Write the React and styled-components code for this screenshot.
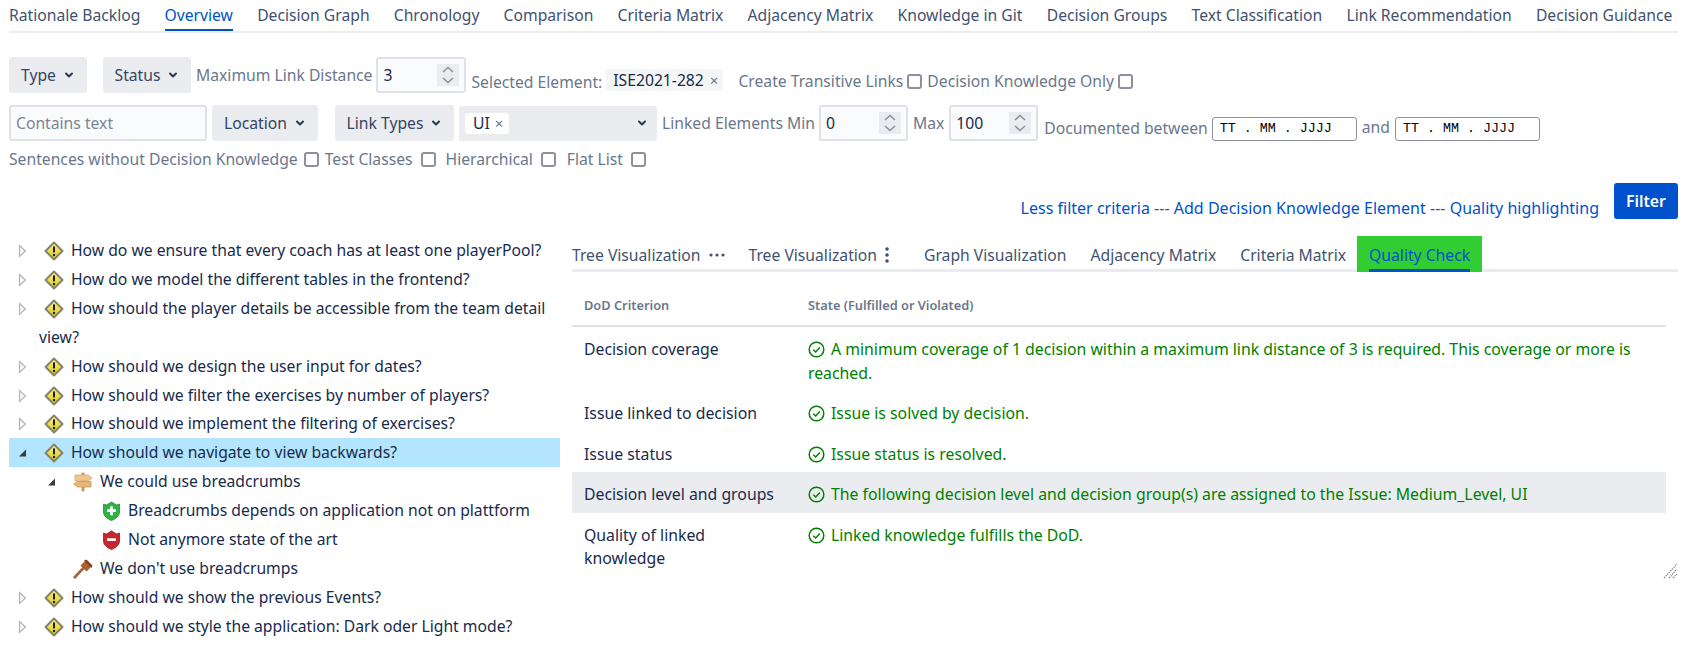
import React from "react";
import styled, { createGlobalStyle } from "styled-components";

const Global = createGlobalStyle`
  html, body {
    margin: 0;
    height: 645px;
    overflow: hidden;
    background: #fff;
  }
  body {
    font-family: "Noto Sans", "Open Sans", sans-serif;
    font-size: 15.7px;
    color: #172b4d;
  }
`;

const Page = styled.div`
  width: 1669px;
  padding: 0 7px 0 9px;
`;

const MainTabs = styled.nav`
  display: flex;
  gap: 24.2px;
  height: 31px;
  border-bottom: 2px solid #ebecf0;
`;

const MainTab = styled.a`
  height: 31px;
  line-height: 30px;
  white-space: nowrap;
  color: ${(p) => (p.$active ? "#0052cc" : "#42526e")};
  box-shadow: ${(p) => (p.$active ? "inset 0 -2px 0 #0052cc" : "none")};
`;

const FilterRow = styled.div`
  display: flex;
  align-items: center;
  height: ${(p) => p.$height || 36}px;
  margin-top: ${(p) => p.$top || 0}px;
`;

const DropButton = styled.div`
  box-sizing: border-box;
  display: flex;
  align-items: center;
  justify-content: center;
  gap: 7px;
  width: ${(p) => p.$width}px;
  height: 36px;
  margin-right: ${(p) => p.$right || 0}px;
  background: #ebecf0;
  border-radius: 3px;
  color: #344563;
  white-space: nowrap;
`;

const Label = styled.span`
  color: #6b778c;
  white-space: nowrap;
  margin-left: ${(p) => p.$left || 0}px;
  margin-right: ${(p) => p.$right || 0}px;
  position: relative;
  top: ${(p) => p.$down || 0}px;
`;

const TextBox = styled.div`
  box-sizing: border-box;
  display: flex;
  align-items: center;
  width: ${(p) => p.$width}px;
  height: 36px;
  margin-right: ${(p) => p.$right || 0}px;
  padding-left: 5px;
  background: #fafbfc;
  border: 2px solid #dfe1e6;
  border-radius: 3px;
  color: ${(p) => (p.$placeholder ? "#7a869a" : "#172b4d")};
`;

const Spinner = styled.svg`
  margin-left: auto;
  margin-right: 5px;
  flex: none;
`;

const ChipSelected = styled.span`
  display: inline-flex;
  align-items: center;
  gap: 6px;
  height: 22px;
  margin-left: 4px;
  padding: 0 5px 0 7px;
  background: #f4f5f7;
  border-radius: 3px;
  position: relative;
  top: 5px;
  white-space: nowrap;
`;

const ChipX = styled.span`
  font-size: 15px;
  color: #6b778c;
`;

const MultiSelect = styled.div`
  box-sizing: border-box;
  display: flex;
  align-items: center;
  justify-content: space-between;
  width: 198px;
  height: 35px;
  margin-left: 5px;
  padding: 0 9px 0 6px;
  background: #ebecf0;
  border-radius: 3px;
`;

const SelectChip = styled.span`
  display: inline-flex;
  align-items: center;
  gap: 5px;
  height: 21px;
  padding: 0 6px 0 8px;
  background: #fff;
  border-radius: 3px;
`;

const Check = styled.span`
  box-sizing: border-box;
  display: inline-block;
  flex: none;
  width: 15px;
  height: 15px;
  margin-left: ${(p) => p.$left || 4}px;
  margin-right: ${(p) => p.$right || 0}px;
  margin-top: ${(p) => p.$down || 0}px;
  border: 2px solid #8f8f9d;
  border-radius: 3px;
  background: #fff;
`;

const DateBox = styled.div`
  box-sizing: border-box;
  width: 145px;
  height: 24px;
  margin-top: 12px;
  padding: 0 0 0 7px;
  line-height: 21px;
  border: 1px solid #8f8f9d;
  border-radius: 3px;
  font-family: "Liberation Mono", monospace;
  font-size: 13.33px;
  color: #000;
  white-space: pre;
`;

const ActionRow = styled.div`
  display: flex;
  justify-content: flex-end;
  align-items: flex-end;
  height: 36px;
  margin-top: 12px;
`;

const Links = styled.div`
  margin-right: 15px;
  color: #42526e;
  font-size: 16.05px;
  line-height: 22px;
  white-space: nowrap;
`;

const LinkText = styled.a`
  color: #0052cc;
`;

const FilterButton = styled.button`
  width: 64px;
  height: 36px;
  padding: 0;
  border: none;
  border-radius: 3px;
  background: #0052cc;
  color: #fff;
  font: 600 15.8px "Noto Sans", sans-serif;
`;

const Panels = styled.div`
  display: grid;
  grid-template-columns: 551px 1106px;
  gap: 12px;
  margin-top: 17px;
  position: relative;
`;

const Tree = styled.ul`
  list-style: none;
  margin: 0;
  padding: 0;
  line-height: 28.9px;
`;

const Node = styled.li`
  position: relative;
  padding-left: ${(p) => 30 + (p.$level || 0) * 29}px;
  padding-right: 8px;
  background: ${(p) => (p.$selected ? "#b3e5ff" : "transparent")};
`;

const Arrow = styled.svg`
  position: absolute;
  top: 8px;
  left: ${(p) => 7 + (p.$level || 0) * 29}px;
`;

const NodeIcon = styled.svg`
  display: inline-block;
  vertical-align: -5px;
  margin: 0 7px 0 5px;
`;

const RightPanel = styled.section`
  min-width: 0;
`;

const SubTabs = styled.div`
  display: flex;
  gap: 24px;
  height: 33px;
  border-bottom: 3px solid #ebecf0;
`;

const SubTab = styled.a`
  display: flex;
  align-items: center;
  gap: 8px;
  height: 38px;
  margin-right: ${(p) => p.$right || 0}px;
  color: #42526e;
  white-space: nowrap;
`;

const ActiveTab = styled.a`
  display: block;
  height: 36px;
  margin-left: -13px;
  padding: 0 12px;
  background: #32cd32;
  color: #0052cc;
  line-height: 38px;
  white-space: nowrap;
`;

const ActiveLabel = styled.span`
  display: block;
  height: 36px;
  box-sizing: border-box;
  border-bottom: 3px solid #0052cc;
`;

const Table = styled.table`
  width: 1094px;
  border-collapse: collapse;
  table-layout: fixed;
`;

const HeadCell = styled.th`
  height: 54px;
  padding: 13px 12px 0;
  box-sizing: border-box;
  border-bottom: 2px solid #dfe1e6;
  text-align: left;
  font-size: 12.8px;
  font-weight: 600;
  color: #6b778c;
  width: ${(p) => p.$width || "auto"};
`;

const Row = styled.tr`
  background: ${(p) => (p.$shade ? "#ebecf0" : "transparent")};
`;

const Cell = styled.td`
  padding: 11px ${(p) => (p.$ok ? 12 : 8)}px 6px 12px;
  font-size: 15.8px;
  line-height: 23.5px;
  vertical-align: top;
  color: ${(p) => (p.$ok ? "#008000" : "#172b4d")};
`;

const OkIcon = styled.svg`
  display: inline-block;
  vertical-align: -3px;
  margin-right: 6px;
`;

const ResizeHandle = styled.svg`
  position: absolute;
  left: 1654px;
  top: 327px;
`;

function Chevron() {
  return (
    <svg width="12" height="12" viewBox="0 0 12 12">
      <path d="M3 4.5 L6 7.5 L9 4.5" fill="none" stroke="#253858" strokeWidth="2" strokeLinecap="round" strokeLinejoin="round" />
    </svg>
  );
}

function Spin() {
  return (
    <Spinner width="22" height="22" viewBox="0 0 22 22">
      <rect width="22" height="22" fill="#ebecf0" />
      <path d="M6 8 L11 3.5 L16 8 M6 14 L11 18.5 L16 14" fill="none" stroke="#8d939e" strokeWidth="1.6" />
    </Spinner>
  );
}

function Warn() {
  return (
    <NodeIcon width="20" height="20" viewBox="0 0 20 20">
      <defs>
        <linearGradient id="warnfill" x1="0" y1="0" x2="0" y2="1">
          <stop offset="0" stopColor="#fff38a" />
          <stop offset="1" stopColor="#d6c810" />
        </linearGradient>
      </defs>
      <path d="M10 1.5 L18.5 10 L10 18.5 L1.5 10 Z" fill="url(#warnfill)" stroke="#85826c" strokeWidth="2" strokeLinejoin="round" />
      <rect x="9" y="5.2" width="2" height="6.4" rx="0.8" fill="#1b1b1b" />
      <circle cx="10" cy="14" r="1.2" fill="#1b1b1b" />
    </NodeIcon>
  );
}

function Sign() {
  return (
    <NodeIcon width="20" height="20" viewBox="0 0 20 20">
      <rect x="8.5" y="0.5" width="3" height="19" rx="1" fill="#c59a63" />
      <path d="M2 3 H15.5 L19 6 L15.5 9 H2 Z" fill="#eec48f" stroke="#d7aa74" strokeWidth="0.8" />
      <path d="M18 9.5 H4.5 L0.8 12.2 L4.5 15 H18 Z" fill="#e5b67c" stroke="#c9985f" strokeWidth="0.8" />
    </NodeIcon>
  );
}

function Shield({ color, dark, plus }) {
  return (
    <NodeIcon width="19" height="20" viewBox="0 0 18 20">
      <path d="M1 3 L4 4 L9 1 L14 4 L17 3 V11 C17 15 13 18 9 19.5 C5 18 1 15 1 11 Z" fill={color} stroke={dark} strokeWidth="0.8" />
      <rect x="4.5" y="8.2" width="9" height="2.8" rx="0.5" fill="#fff" />
      {plus && <rect x="7.6" y="5.2" width="2.8" height="9" rx="0.5" fill="#fff" />}
    </NodeIcon>
  );
}

function Gavel() {
  return (
    <NodeIcon width="20" height="20" viewBox="0 0 20 20">
      <path d="M1.8 18.2 L10 9.5" stroke="#a5673f" strokeWidth="2.8" strokeLinecap="round" />
      <path d="M7.5 6.5 L12.5 1.5 L18.5 7.5 L13.5 12.5 Z" fill="#a9602c" />
      <path d="M11 1.5 L13.5 0.5 L19.5 6.5 L18.5 9 Z" fill="#7f4419" />
    </NodeIcon>
  );
}

function ClosedArrow({ level }) {
  return (
    <Arrow $level={level} width="12" height="14" viewBox="0 0 12 14">
      <path d="M3.5 1.5 L9.5 7 L3.5 12.5 Z" fill="#f6f6f6" stroke="#b5b5b5" strokeWidth="1.2" />
    </Arrow>
  );
}

function OpenArrow({ level }) {
  return (
    <Arrow $level={level} width="12" height="14" viewBox="0 0 12 14">
      <path d="M10 3.5 V10.5 H3 Z" fill="#3c3c3c" />
    </Arrow>
  );
}

function Ok() {
  return (
    <OkIcon width="17" height="17" viewBox="0 0 17 17">
      <circle cx="8.5" cy="8.5" r="7.3" fill="none" stroke="#008000" strokeWidth="1.5" />
      <path d="M5.3 8.7 L7.7 11 L11.8 6.4" fill="none" stroke="#008000" strokeWidth="1.5" />
    </OkIcon>
  );
}

const mainTabs = [
  "Rationale Backlog",
  "Overview",
  "Decision Graph",
  "Chronology",
  "Comparison",
  "Criteria Matrix",
  "Adjacency Matrix",
  "Knowledge in Git",
  "Decision Groups",
  "Text Classification",
  "Link Recommendation",
  "Decision Guidance",
];

const topQuestions = [
  "How do we ensure that every coach has at least one playerPool?",
  "How do we model the different tables in the frontend?",
  "How should the player details be accessible from the team detail view?",
  "How should we design the user input for dates?",
  "How should we filter the exercises by number of players?",
  "How should we implement the filtering of exercises?",
];

const lastQuestions = [
  "How should we show the previous Events?",
  "How should we style the application: Dark oder Light mode?",
];

export default function App() {
  return (
    <Page>
      <Global />
      <MainTabs>
        {mainTabs.map((t) => (
          <MainTab key={t} $active={t === "Overview"}>{t}</MainTab>
        ))}
      </MainTabs>

      <FilterRow $top={24}>
        <DropButton $width={78} $right={16}>Type <Chevron /></DropButton>
        <DropButton $width={88}>Status <Chevron /></DropButton>
        <Label $left={5} $right={4}>Maximum Link Distance</Label>
        <TextBox $width={90}>3<Spin /></TextBox>
        <Label $left={5} $down={7}>Selected Element:</Label>
        <ChipSelected>ISE2021-282 <ChipX>×</ChipX></ChipSelected>
        <Label $left={15} $down={6}>Create Transitive Links</Label>
        <Check $left={4} $down={12} />
        <Label $left={5} $down={6}>Decision Knowledge Only</Label>
        <Check $left={4} $down={12} />
      </FilterRow>

      <FilterRow $top={12}>
        <TextBox $width={198} $placeholder $right={5}>Contains text</TextBox>
        <DropButton $width={106} $right={17}>Location <Chevron /></DropButton>
        <DropButton $width={119}>Link Types <Chevron /></DropButton>
        <MultiSelect>
          <SelectChip>UI <ChipX>×</ChipX></SelectChip>
          <Chevron />
        </MultiSelect>
        <Label $left={5} $right={4}>Linked Elements Min</Label>
        <TextBox $width={89}>0<Spin /></TextBox>
        <Label $left={5} $right={5}>Max</Label>
        <TextBox $width={89}>100<Spin /></TextBox>
        <Label $left={6} $right={4} $down={5}>Documented between</Label>
        <DateBox>{"TT . MM . JJJJ"}</DateBox>
        <Label $left={5} $right={5} $down={4}>and</Label>
        <DateBox>{"TT . MM . JJJJ"}</DateBox>
      </FilterRow>

      <FilterRow $height={24} $top={6}>
        <Label>Sentences without Decision Knowledge</Label>
        <Check $left={6} $right={6} />
        <Label>Test Classes</Label>
        <Check $left={8} $right={10} />
        <Label>Hierarchical</Label>
        <Check $left={8} $right={11} />
        <Label>Flat List</Label>
        <Check $left={8} />
      </FilterRow>

      <ActionRow>
        <Links>
          <LinkText>Less filter criteria</LinkText> --- <LinkText>Add Decision Knowledge Element</LinkText> --- <LinkText>Quality highlighting</LinkText>
        </Links>
        <FilterButton>Filter</FilterButton>
      </ActionRow>

      <Panels>
        <Tree>
          {topQuestions.map((q) => (
            <Node key={q}><ClosedArrow /><Warn />{q}</Node>
          ))}
          <Node $selected><OpenArrow /><Warn />How should we navigate to view backwards?</Node>
          <Node $level={1}><OpenArrow level={1} /><Sign />We could use breadcrumbs</Node>
          <Node $level={2}><Shield color="#2fb344" dark="#1f8a30" plus />Breadcrumbs depends on application not on plattform</Node>
          <Node $level={2}><Shield color="#c9252c" dark="#8f1a1f" />Not anymore state of the art</Node>
          <Node $level={1}><Gavel />We don't use breadcrumps</Node>
          {lastQuestions.map((q) => (
            <Node key={q}><ClosedArrow /><Warn />{q}</Node>
          ))}
          <Node><Warn /></Node>
        </Tree>

        <RightPanel>
          <SubTabs>
            <SubTab>
              Tree Visualization
              <svg width="16" height="4" viewBox="0 0 16 4">
                <circle cx="2" cy="2" r="1.6" fill="#42526e" />
                <circle cx="8" cy="2" r="1.6" fill="#42526e" />
                <circle cx="14" cy="2" r="1.6" fill="#42526e" />
              </svg>
            </SubTab>
            <SubTab $right={11}>
              Tree Visualization
              <svg width="4" height="16" viewBox="0 0 4 16">
                <circle cx="2" cy="2" r="1.8" fill="#42526e" />
                <circle cx="2" cy="8" r="1.8" fill="#42526e" />
                <circle cx="2" cy="14" r="1.8" fill="#42526e" />
              </svg>
            </SubTab>
            <SubTab>Graph Visualization</SubTab>
            <SubTab>Adjacency Matrix</SubTab>
            <SubTab>Criteria Matrix</SubTab>
            <ActiveTab><ActiveLabel>Quality Check</ActiveLabel></ActiveTab>
          </SubTabs>

          <Table>
            <thead>
              <tr>
                <HeadCell $width="224px">DoD Criterion</HeadCell>
                <HeadCell>State (Fulfilled or Violated)</HeadCell>
              </tr>
            </thead>
            <tbody>
              <Row>
                <Cell>Decision coverage</Cell>
                <Cell $ok><Ok />A minimum coverage of 1 decision within a maximum link distance of 3 is required. This coverage or more is reached.</Cell>
              </Row>
              <Row>
                <Cell>Issue linked to decision</Cell>
                <Cell $ok><Ok />Issue is solved by decision.</Cell>
              </Row>
              <Row>
                <Cell>Issue status</Cell>
                <Cell $ok><Ok />Issue status is resolved.</Cell>
              </Row>
              <Row $shade>
                <Cell>Decision level and groups</Cell>
                <Cell $ok><Ok />The following decision level and decision group(s) are assigned to the Issue: Medium_Level, UI</Cell>
              </Row>
              <Row>
                <Cell>Quality of linked knowledge</Cell>
                <Cell $ok><Ok />Linked knowledge fulfills the DoD.</Cell>
              </Row>
            </tbody>
          </Table>
        </RightPanel>

        <ResizeHandle width="15" height="16" viewBox="0 0 15 16">
          <path d="M1 15 L14 1 M6 15 L14 6 M10 15 L14 11" stroke="#8a8a8a" strokeWidth="1.2" strokeDasharray="1.5 0.8" fill="none" />
        </ResizeHandle>
      </Panels>
    </Page>
  );
}
